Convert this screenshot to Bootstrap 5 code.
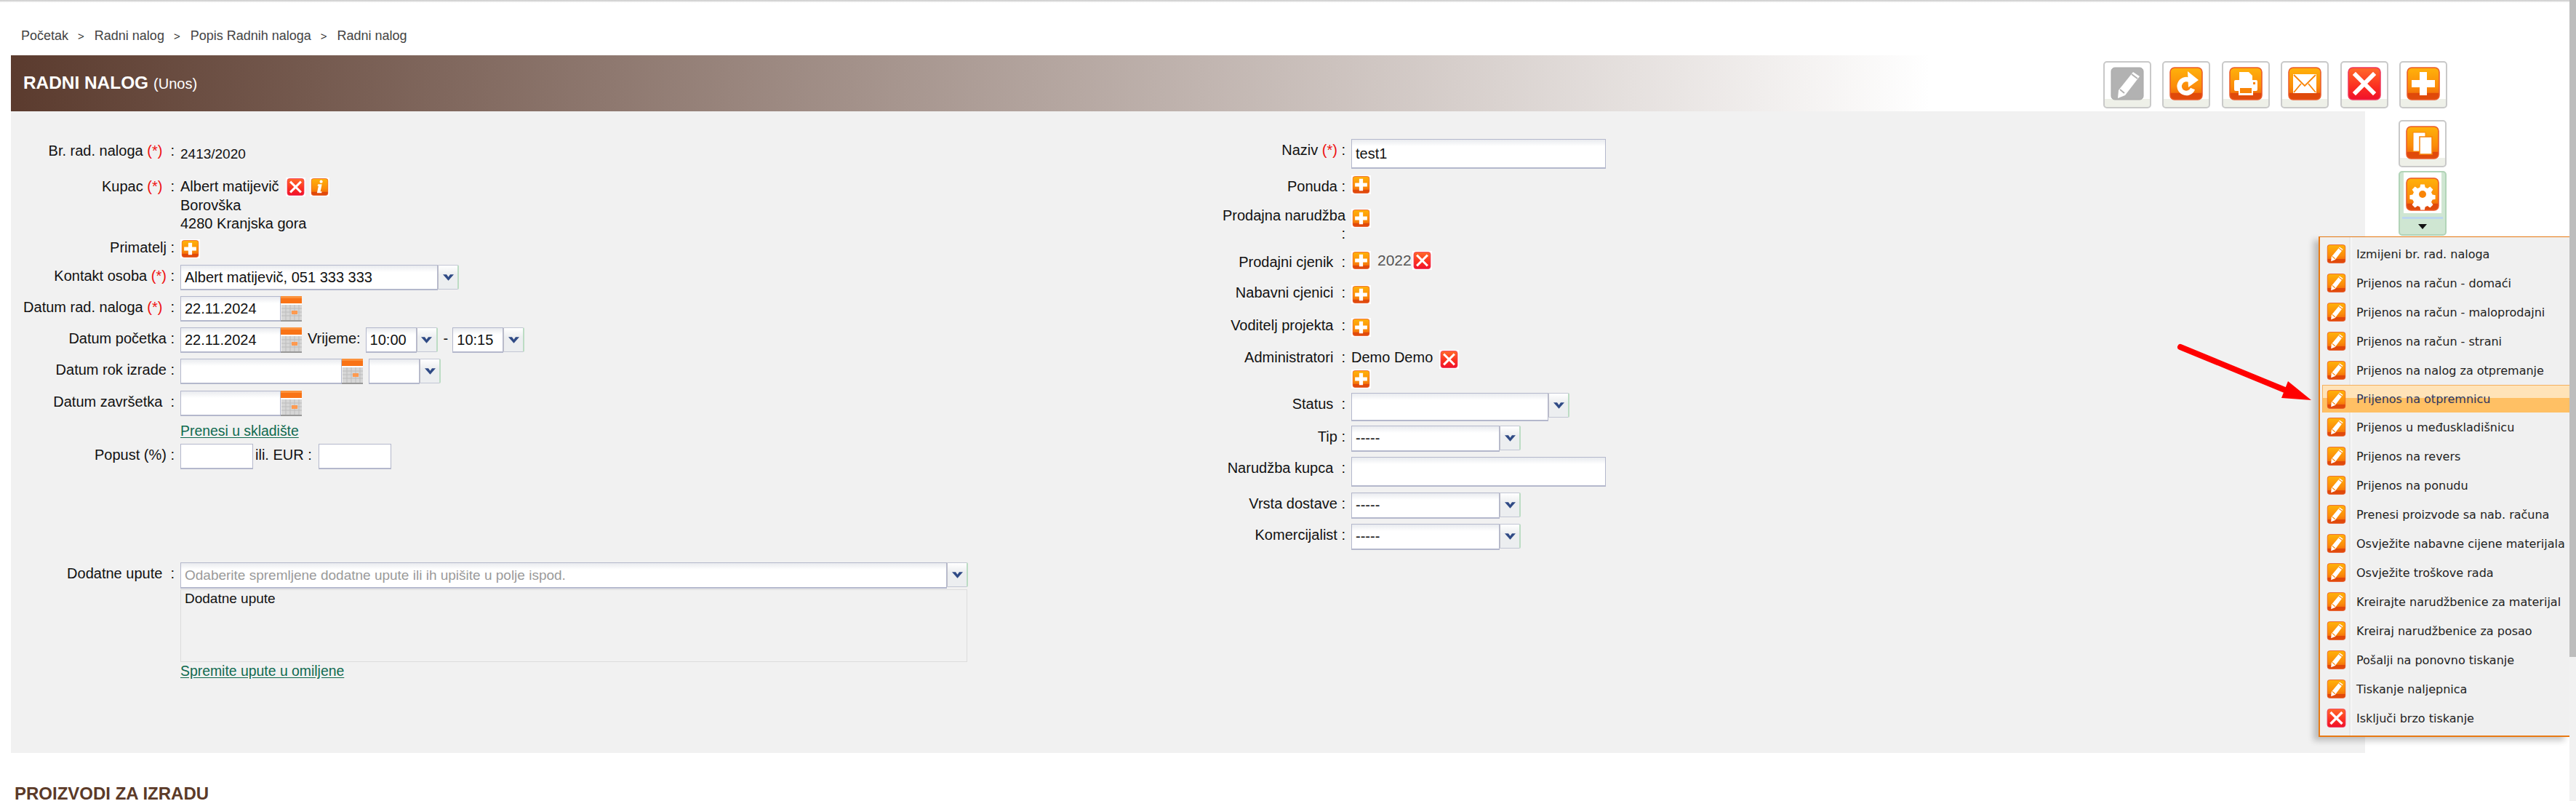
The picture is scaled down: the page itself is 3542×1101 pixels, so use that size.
<!DOCTYPE html>
<html lang="en">
<head>
    <meta charset="UTF-8">
    <title>Radni nalog</title>
    <link href="https://cdn.jsdelivr.net/npm/bootstrap@5.3.0/dist/css/bootstrap.min.css" rel="stylesheet">
    <style>
        html, body { height: 1101px; overflow: hidden; }
        body { font-family: "Liberation Sans", Arial, sans-serif; font-size: 20px; line-height: 25px; color: #111; background: #fff; position: relative; }
        .top-shade { height: 3px; background: linear-gradient(#c8c8c8, #f4f4f4); }
        .page-scroll { position: absolute; top: 0; right: 0; width: 9px; height: 1101px; background: #f1f1f1; }
        .page-scroll div { height: 903px; background: #bdbdbd; }

        .crumbs { height: 73px; padding: 34px 0 0 29px; font-size: 18px; line-height: 24px; color: #444; }
        .crumbs span { margin: 0 14px 0 13px; color: #333; font-size: 15px; }

        .title-bar { height: 77px; margin-left: 15px; padding-left: 17px; color: #fff; background: linear-gradient(90deg, #5b3b2e 0, #fff 2640px); }
        .title-bar b { font-size: 24.4px; }
        .title-bar small { font-size: 20px; margin-left: 7px; }
        .tool-row { margin-left: auto; margin-right: 177px; gap: 15.5px; padding-top: 3px; }

        .tool-btn { width: 66px; height: 65px; padding: 6px 6px 0 8px; flex: none; border: 2px solid #c9c9c9; border-radius: 5px; background: linear-gradient(#fff 82%, #eef0e8 82%); }
        .tool-btn svg { display: block; width: 46px; height: 46px; }
        .tool-btn.is-open { height: 89px; padding: 0; background: #cfe6d2; border-color: #b2d4b8; }
        .open-top { height: 56px; margin: 0 5px; padding: 7px 0 0 3px; background: #fff; }
        .open-line { height: 3px; margin: 5px 3px 0; background: #bcd6ee; }
        .open-arrow { width: 0; height: 0; margin: 7px auto 0; border-left: 6px solid transparent; border-right: 6px solid transparent; border-top: 7px solid #111; }

        .body-wrap { height: 882px; }
        .form-panel { width: 3237px; margin-left: 15px; background: #f1f1f1; padding-top: 38px; }
        .side-tools { width: 66px; margin-left: 46px; padding-top: 12px; gap: 5px; }

        .left-col { width: 1586px; flex: none; }
        .right-col { flex: 1; }
        .fld { display: flex; }
        .fld-label { flex: none; width: 225px; text-align: right; line-height: 30px; }
        .fld-label em { font-style: normal; color: #e11; }
        .left-col .fld-value { margin-left: 8px; }
        .right-col .fld-label { width: 249px; }
        .right-col .fld-value { margin-left: 8px; }

        .r-nr { height: 52px; }
        .r-nr .fld-label { padding-top: 4px; line-height: 25px; }
        .r-nr .fld-value { padding-top: 8px; font-size: 19px; }
        .r-kupac { height: 86px; padding-top: 1px; }
        .r-kupac .fld-label { line-height: 25px; }
        .r-prim { height: 35px; }
        .r-prim .fld-label { line-height: 22px; }
        .r-contact, .r-date, .r-start, .r-due, .r-end { height: 43px; }
        .r-due { height: 44px; }
        .r-link { height: 30px; padding-left: 233px; }
        .r-disc { height: 163px; }
        .r-notes { height: 36px; }

        .plain-input { height: 35px; padding: 0 5px; border: 1px solid #b4b8cc; border-bottom-width: 2px; border-radius: 0; background: linear-gradient(#e9ebef, #fff 9px); font-size: 20px; color: #111; outline: none; box-shadow: none; }
        .plain-input::placeholder { color: #9a9a9a; }
        .w-date { width: 138px; }
        .w-due { width: 222px; }
        .w-disc { width: 100px; background: #fff; }
        .w-name { width: 350px; height: 41px; }
        .w-contact { width: 354px; }
        .w-time { width: 70px; }
        .w-status { width: 271px; height: 39px; }
        .w-type { width: 204px; height: 36px; }
        .w-note { width: 1054px; height: 36px; color: #666; font-size: 19px; }

        .drop-group { display: flex; flex-wrap: nowrap; align-items: flex-start; }
        .drop-btn { flex: none; width: 29px; height: 34px; padding: 0; border: 1px solid #c2c6d4; border-left-color: #bdbdc8; border-right: 2px solid #bcdcc4; border-radius: 0 2px 2px 0; background: linear-gradient(#fff, #eceef0 40%); }
        .drop-btn svg { display: block; width: 15px; height: 9px; margin: 0 auto; }

        .cal-ico { display: block; flex: none; width: 29px; height: 35px; }
        .gap-time { margin: 0 7px 0 8px; line-height: 30px; }
        .gap-eur { margin: 0 9px 0 3px; line-height: 30px; }
        .dash { margin: 0 6px 0 8px; line-height: 30px; }
        .due-drop { margin-left: 8px; }

        .green-link { color: #0f6a4f; text-decoration: underline; font-size: 19.4px; text-underline-offset: 2px; }
        .notes-box { width: 1082px; height: 100px; margin-left: 233px; margin-top: 1px; padding: 0 5px; border: 1px solid #dcdcdc; font-size: 19px; line-height: 24px; }
        .notes-link { padding-left: 233px; line-height: 22px; margin-top: 1px; }

        .mini-ico { display: inline-block; width: 27px; height: 26px; padding: 1px; background: #fff; vertical-align: top; }
        .mini-ico svg { display: block; width: 25px; height: 24px; }
        .x-gap { margin-left: 9px; }
        .i-gap { margin-left: 6px; }

        .r-naziv { height: 50px; }
        .r-naziv .fld-label { padding-top: 3px; line-height: 25px; }
        .r-ponuda { height: 46px; }
        .r-narudzba { height: 58px; }
        .r-narudzba .fld-label { line-height: 25px; margin-top: -3px; }
        .r-cjenik { height: 47px; }
        .r-nabavni { height: 45px; }
        .r-voditelj { height: 44px; }
        .r-admin { height: 59px; }
        .r-nabavni .fld-label, .r-voditelj .fld-label, .r-admin .fld-label { line-height: 20px; }
        .r-status { height: 45px; }
        .r-tip { height: 43px; }
        .r-broj { height: 49px; }
        .r-vrsta { height: 43px; }
        .r-komer { height: 36px; }
        .price-year { margin: 0 1px 0 9px; color: #555; font-size: 21px; line-height: 26px; }
        .admin-line { height: 27px; line-height: 20px; }

        .bottom-title { padding: 42px 0 0 20px; font-size: 24px; font-weight: 700; line-height: 28px; color: #5b3a28; }

        /* otvoreni izbornik */
        .action-menu { position: absolute; left: 3188px; top: 325px; width: 345px; height: 688px; margin: 0; padding: 3px 0 0 3px; list-style: none; background: linear-gradient(90deg, #f0f0f0 40px, #e3e3e3 40px, #fbfbfb 44px, #f0f0f0 44px); border: 1px solid #e87a14; border-width: 1px 0 2px 2px; box-shadow: -7px 5px 8px rgba(0, 0, 0, .22); font-family: "DejaVu Sans", sans-serif; font-size: 16px; color: #222; }
        .action-menu li { display: flex; align-items: center; height: 40px; padding-left: 6px; gap: 14px; }
        .action-menu li svg { display: block; width: 27px; height: 26px; flex: none; }
        .action-menu li.is-hot { height: 38px; padding-left: 5px; background: linear-gradient(#ffe3b8 45%, #ffc064 45%); border: 1px solid #f5b060; border-right: 0; border-bottom: 0; color: #2b3560; }
        .red-arrow { position: absolute; left: 2990px; top: 465px; width: 195px; height: 90px; }
    </style>
</head>
<body>
    <svg width="0" height="0" class="position-absolute">
        <defs>
            <linearGradient id="gOrange" x1="0" y1="0" x2="0" y2="1">
                <stop offset="0" stop-color="#ffb20a"/>
                <stop offset=".6" stop-color="#fb8c0a"/>
                <stop offset=".78" stop-color="#f4750a"/>
                <stop offset=".8" stop-color="#e0480a"/>
                <stop offset="1" stop-color="#e04c0c"/>
            </linearGradient>
            <linearGradient id="gRed" x1="0" y1="0" x2="0" y2="1">
                <stop offset="0" stop-color="#ff6a2a"/>
                <stop offset=".6" stop-color="#fb2e20"/>
                <stop offset="1" stop-color="#f0102c"/>
            </linearGradient>
            <symbol id="base" viewBox="0 0 46 46"><rect x="1" y="1" width="44" height="44" rx="6" fill="url(#gOrange)" stroke="#ea5a2a" stroke-width="1.5"/></symbol>
            <symbol id="ic-plus" viewBox="0 0 46 46"><use href="#base" width="46" height="46"/><path d="M18 7h10v11h11v10H28v11H18V28H7V18h11z" fill="#fff"/></symbol>
            <symbol id="ic-x" viewBox="0 0 46 46"><rect x="1" y="1" width="44" height="44" rx="6" fill="url(#gRed)" stroke="#f0345a" stroke-width="1.5"/><path d="M11 11l24 24M35 11L11 35" stroke="#fff" stroke-width="6" stroke-linecap="square" fill="none"/></symbol>
            <symbol id="ic-info" viewBox="0 0 46 46"><use href="#base" width="46" height="46"/><circle cx="27" cy="9" r="4" fill="#fff"/><path d="M19 16h10l-4 19h4l-1 4H16l4-19h-3z" fill="#fff"/></symbol>
            <symbol id="ic-pen" viewBox="0 0 46 46"><use href="#base" width="46" height="46"/><path d="M31 6l8 6-19 25-10 4 1-11z" fill="#fff"/><path d="M29 9l8 6M13 29l7 6" stroke="#f98508" stroke-width="2"/></symbol>
            <symbol id="ic-pen-off" viewBox="0 0 46 46"><rect x="1" y="1" width="44" height="44" rx="5" fill="#b2b2b2" stroke="#a8a8a8"/><path d="M31 7l9 6-20 26-10 4 1-11z" fill="#fff"/><path d="M29 10l8 6M13 31l6 5" stroke="#b2b2b2" stroke-width="2"/></symbol>
            <symbol id="ic-redo" viewBox="0 0 46 46"><use href="#base" width="46" height="46"/><path d="M29 19a9.500 9.500 0 1 0 3 11" fill="none" stroke="#fff" stroke-width="6.500"/><path d="M25 6l15 12-14 10z" fill="#fff"/></symbol>
            <symbol id="ic-print" viewBox="0 0 46 46"><use href="#base" width="46" height="46"/><path d="M14 7h13l5 5v7H14z" fill="#fff"/><rect x="7" y="18" width="32" height="15" rx="2" fill="#fff"/><rect x="13" y="26" width="20" height="13" fill="#fff"/><rect x="15" y="29" width="16" height="7" fill="#f98508"/><rect x="33" y="21" width="3" height="3" fill="#f98508"/></symbol>
            <symbol id="ic-mail" viewBox="0 0 46 46"><use href="#base" width="46" height="46"/><rect x="7" y="10" width="32" height="26" fill="#fff"/><path d="M8 11l15 15 15-15M8 35l10-12M38 35L28 23" fill="none" stroke="#f98508" stroke-width="1.800"/></symbol>
            <symbol id="ic-copy" viewBox="0 0 46 46"><use href="#base" width="46" height="46"/><rect x="10" y="9" width="17" height="26" fill="#fff" stroke="#f98508"/><rect x="19" y="15" width="17" height="24" fill="#fff" stroke="#f98508" stroke-width="1.500"/></symbol>
            <symbol id="ic-gear" viewBox="0 0 46 46"><use href="#base" width="46" height="46"/><path d="M19.500 6h7l1 5 4 2 4.500-3 5 5-3 4.500 2 4 5 1v7l-5 1-2 4 3 4.500-5 5-4.500-3-4 2-1 5h-7l-1-5-4-2-4.500 3-5-5 3-4.500-2-4-5-1v-7l5-1 2-4-3-4.500 5-5 4.500 3 4-2z" fill="#fff" transform="translate(4.600 4.600) scale(.8)"/><circle cx="23" cy="23" r="5" fill="#f98508"/></symbol>
            <symbol id="ic-cal" viewBox="0 0 29 35"><rect width="29" height="10" fill="#f97316"/><rect width="29" height="3" fill="#fb923c"/><rect y="10" width="29" height="2" fill="#fff"/><rect x="1" y="12" width="28" height="21" fill="#d6d6d6"/><path d="M7 12v21M13 12v21M19 12v21M25 12v21M1 17h28M1 22h28M1 27h28" stroke="#bdbdbd"/><rect x="15" y="20" width="8" height="5" fill="#ff9a50"/><rect y="33" width="29" height="2" fill="#999"/></symbol>
            <symbol id="ic-chev" viewBox="0 0 18 10"><path d="M0 0h6l3 4 3-4h6L9 10z" fill="#2f4a85"/></symbol>
        </defs>
    </svg>

    <div class="top-shade"></div>
    <div class="crumbs">Početak<span>&gt;</span>Radni nalog<span>&gt;</span>Popis Radnih naloga<span>&gt;</span>Radni nalog</div>

    <div class="title-bar d-flex align-items-center">
        <div><b>RADNI NALOG</b><small>(Unos)</small></div>
        <div class="tool-row d-flex">
            <a class="tool-btn"><svg><use href="#ic-pen-off"/></svg></a>
            <a class="tool-btn"><svg><use href="#ic-redo"/></svg></a>
            <a class="tool-btn"><svg><use href="#ic-print"/></svg></a>
            <a class="tool-btn"><svg><use href="#ic-mail"/></svg></a>
            <a class="tool-btn"><svg><use href="#ic-x"/></svg></a>
            <a class="tool-btn"><svg><use href="#ic-plus"/></svg></a>
        </div>
    </div>

    <div class="body-wrap d-flex">
        <div class="form-panel d-flex">
            <div class="left-col">
                <div class="fld r-nr"><div class="fld-label">Br. rad. naloga <em>(*)</em> &nbsp;:</div><div class="fld-value">2413/2020</div></div>
                <div class="fld r-kupac">
                    <div class="fld-label">Kupac <em>(*)</em> &nbsp;:</div>
                    <div class="fld-value">Albert matijevič<span class="mini-ico x-gap"><svg><use href="#ic-x"/></svg></span><span class="mini-ico i-gap"><svg><use href="#ic-info"/></svg></span><br>Borovška<br>4280 Kranjska gora</div>
                </div>
                <div class="fld r-prim"><div class="fld-label">Primatelj :</div><div class="fld-value"><span class="mini-ico"><svg><use href="#ic-plus"/></svg></span></div></div>
                <div class="fld r-contact"><div class="fld-label">Kontakt osoba <em>(*)</em> :</div>
                    <div class="fld-value drop-group"><input class="plain-input w-contact" value="Albert matijevič, 051 333 333"><button class="drop-btn"><svg><use href="#ic-chev"/></svg></button></div></div>
                <div class="fld r-date"><div class="fld-label">Datum rad. naloga <em>(*)</em> &nbsp;:</div>
                    <div class="fld-value d-flex"><input class="plain-input w-date" value="22.11.2024"><svg class="cal-ico"><use href="#ic-cal"/></svg></div></div>
                <div class="fld r-start"><div class="fld-label">Datum početka :</div>
                    <div class="fld-value d-flex"><input class="plain-input w-date" value="22.11.2024"><svg class="cal-ico"><use href="#ic-cal"/></svg>
                        <span class="gap-time">Vrijeme:</span>
                        <div class="drop-group"><input class="plain-input w-time" value="10:00"><button class="drop-btn"><svg><use href="#ic-chev"/></svg></button></div>
                        <span class="dash">-</span>
                        <div class="drop-group"><input class="plain-input w-time" value="10:15"><button class="drop-btn"><svg><use href="#ic-chev"/></svg></button></div>
                    </div></div>
                <div class="fld r-due"><div class="fld-label">Datum rok izrade :</div>
                    <div class="fld-value d-flex"><input class="plain-input w-due"><svg class="cal-ico"><use href="#ic-cal"/></svg>
                        <div class="drop-group due-drop"><input class="plain-input w-time"><button class="drop-btn"><svg><use href="#ic-chev"/></svg></button></div></div></div>
                <div class="fld r-end"><div class="fld-label">Datum završetka &nbsp;:</div>
                    <div class="fld-value d-flex"><input class="plain-input w-date"><svg class="cal-ico"><use href="#ic-cal"/></svg></div></div>
                <div class="r-link"><a class="green-link" href="#">Prenesi u skladište</a></div>
                <div class="fld r-disc"><div class="fld-label">Popust (%) :</div>
                    <div class="fld-value d-flex align-items-start"><input class="plain-input w-disc"><span class="gap-eur">ili. EUR :</span><input class="plain-input w-disc"></div></div>
                <div class="fld r-notes"><div class="fld-label">Dodatne upute &nbsp;:</div>
                    <div class="fld-value drop-group"><input class="plain-input w-note" placeholder="Odaberite spremljene dodatne upute ili ih upišite u polje ispod."><button class="drop-btn"><svg><use href="#ic-chev"/></svg></button></div></div>
                <div class="notes-box">Dodatne upute</div>
                <div class="notes-link"><a class="green-link" href="#">Spremite upute u omiljene</a></div>
            </div>

            <div class="right-col">
                <div class="fld r-naziv"><div class="fld-label">Naziv <em>(*)</em> :</div><div class="fld-value"><input class="plain-input w-name" value="test1"></div></div>
                <div class="fld r-ponuda"><div class="fld-label">Ponuda :</div><div class="fld-value"><span class="mini-ico"><svg><use href="#ic-plus"/></svg></span></div></div>
                <div class="fld r-narudzba"><div class="fld-label">Prodajna narudžba<br>:</div><div class="fld-value"><span class="mini-ico"><svg><use href="#ic-plus"/></svg></span></div></div>
                <div class="fld r-cjenik"><div class="fld-label">Prodajni cjenik &nbsp;:</div><div class="fld-value d-flex"><span class="mini-ico"><svg><use href="#ic-plus"/></svg></span><span class="price-year">2022</span><span class="mini-ico"><svg><use href="#ic-x"/></svg></span></div></div>
                <div class="fld r-nabavni"><div class="fld-label">Nabavni cjenici &nbsp;:</div><div class="fld-value"><span class="mini-ico"><svg><use href="#ic-plus"/></svg></span></div></div>
                <div class="fld r-voditelj"><div class="fld-label">Voditelj projekta &nbsp;:</div><div class="fld-value"><span class="mini-ico"><svg><use href="#ic-plus"/></svg></span></div></div>
                <div class="fld r-admin"><div class="fld-label">Administratori &nbsp;:</div><div class="fld-value"><div class="admin-line">Demo Demo<span class="mini-ico x-gap"><svg><use href="#ic-x"/></svg></span></div><span class="mini-ico"><svg><use href="#ic-plus"/></svg></span></div></div>
                <div class="fld r-status"><div class="fld-label">Status &nbsp;:</div><div class="fld-value drop-group"><input class="plain-input w-status"><button class="drop-btn"><svg><use href="#ic-chev"/></svg></button></div></div>
                <div class="fld r-tip"><div class="fld-label">Tip :</div><div class="fld-value drop-group"><input class="plain-input w-type" value="-----"><button class="drop-btn"><svg><use href="#ic-chev"/></svg></button></div></div>
                <div class="fld r-broj"><div class="fld-label">Narudžba kupca &nbsp;:</div><div class="fld-value"><input class="plain-input w-name"></div></div>
                <div class="fld r-vrsta"><div class="fld-label">Vrsta dostave :</div><div class="fld-value drop-group"><input class="plain-input w-type" value="-----"><button class="drop-btn"><svg><use href="#ic-chev"/></svg></button></div></div>
                <div class="fld r-komer"><div class="fld-label">Komercijalist :</div><div class="fld-value drop-group"><input class="plain-input w-type" value="-----"><button class="drop-btn"><svg><use href="#ic-chev"/></svg></button></div></div>
            </div>
        </div>

        <div class="side-tools d-flex flex-column">
            <a class="tool-btn"><svg><use href="#ic-copy"/></svg></a>
            <a class="tool-btn is-open">
                <div class="open-top"><svg><use href="#ic-gear"/></svg></div>
                <div class="open-line"></div>
                <div class="open-arrow"></div>
            </a>
        </div>
    </div>

    <div class="bottom-title">PROIZVODI ZA IZRADU</div>

    <ul class="action-menu" id="actionMenu"></ul>

    <svg class="red-arrow" viewBox="0 0 195 90"><path d="M8 12l146 60" stroke="#f00" stroke-width="8" stroke-linecap="round" fill="none"/><path d="M188 85l-41-3 9-23z" fill="#f00"/></svg>
    <div class="page-scroll"><div></div></div>

    <script src="https://cdn.jsdelivr.net/npm/bootstrap@5.3.0/dist/js/bootstrap.bundle.min.js"></script>
    <script>
        // stavke izbornika, zadnja ima crveni X
        const items = ['Izmijeni br. rad. naloga', 'Prijenos na račun - domaći', 'Prijenos na račun - maloprodajni',
            'Prijenos na račun - strani', 'Prijenos na nalog za otpremanje', 'Prijenos na otpremnicu',
            'Prijenos u međuskladišnicu', 'Prijenos na revers', 'Prijenos na ponudu', 'Prenesi proizvode sa nab. računa',
            'Osvježite nabavne cijene materijala', 'Osvježite troškove rada', 'Kreirajte narudžbenice za materijal',
            'Kreiraj narudžbenice za posao', 'Pošalji na ponovno tiskanje', 'Tiskanje naljepnica', 'Isključi brzo tiskanje'];
        document.getElementById('actionMenu').innerHTML = items.map((text, i) => `
            <li class="${i === 5 ? 'is-hot' : ''}"><svg><use href="#${i === 16 ? 'ic-x' : 'ic-pen'}"/></svg><span>${text}</span></li>
        `).join('');
    </script>
</body>
</html>
